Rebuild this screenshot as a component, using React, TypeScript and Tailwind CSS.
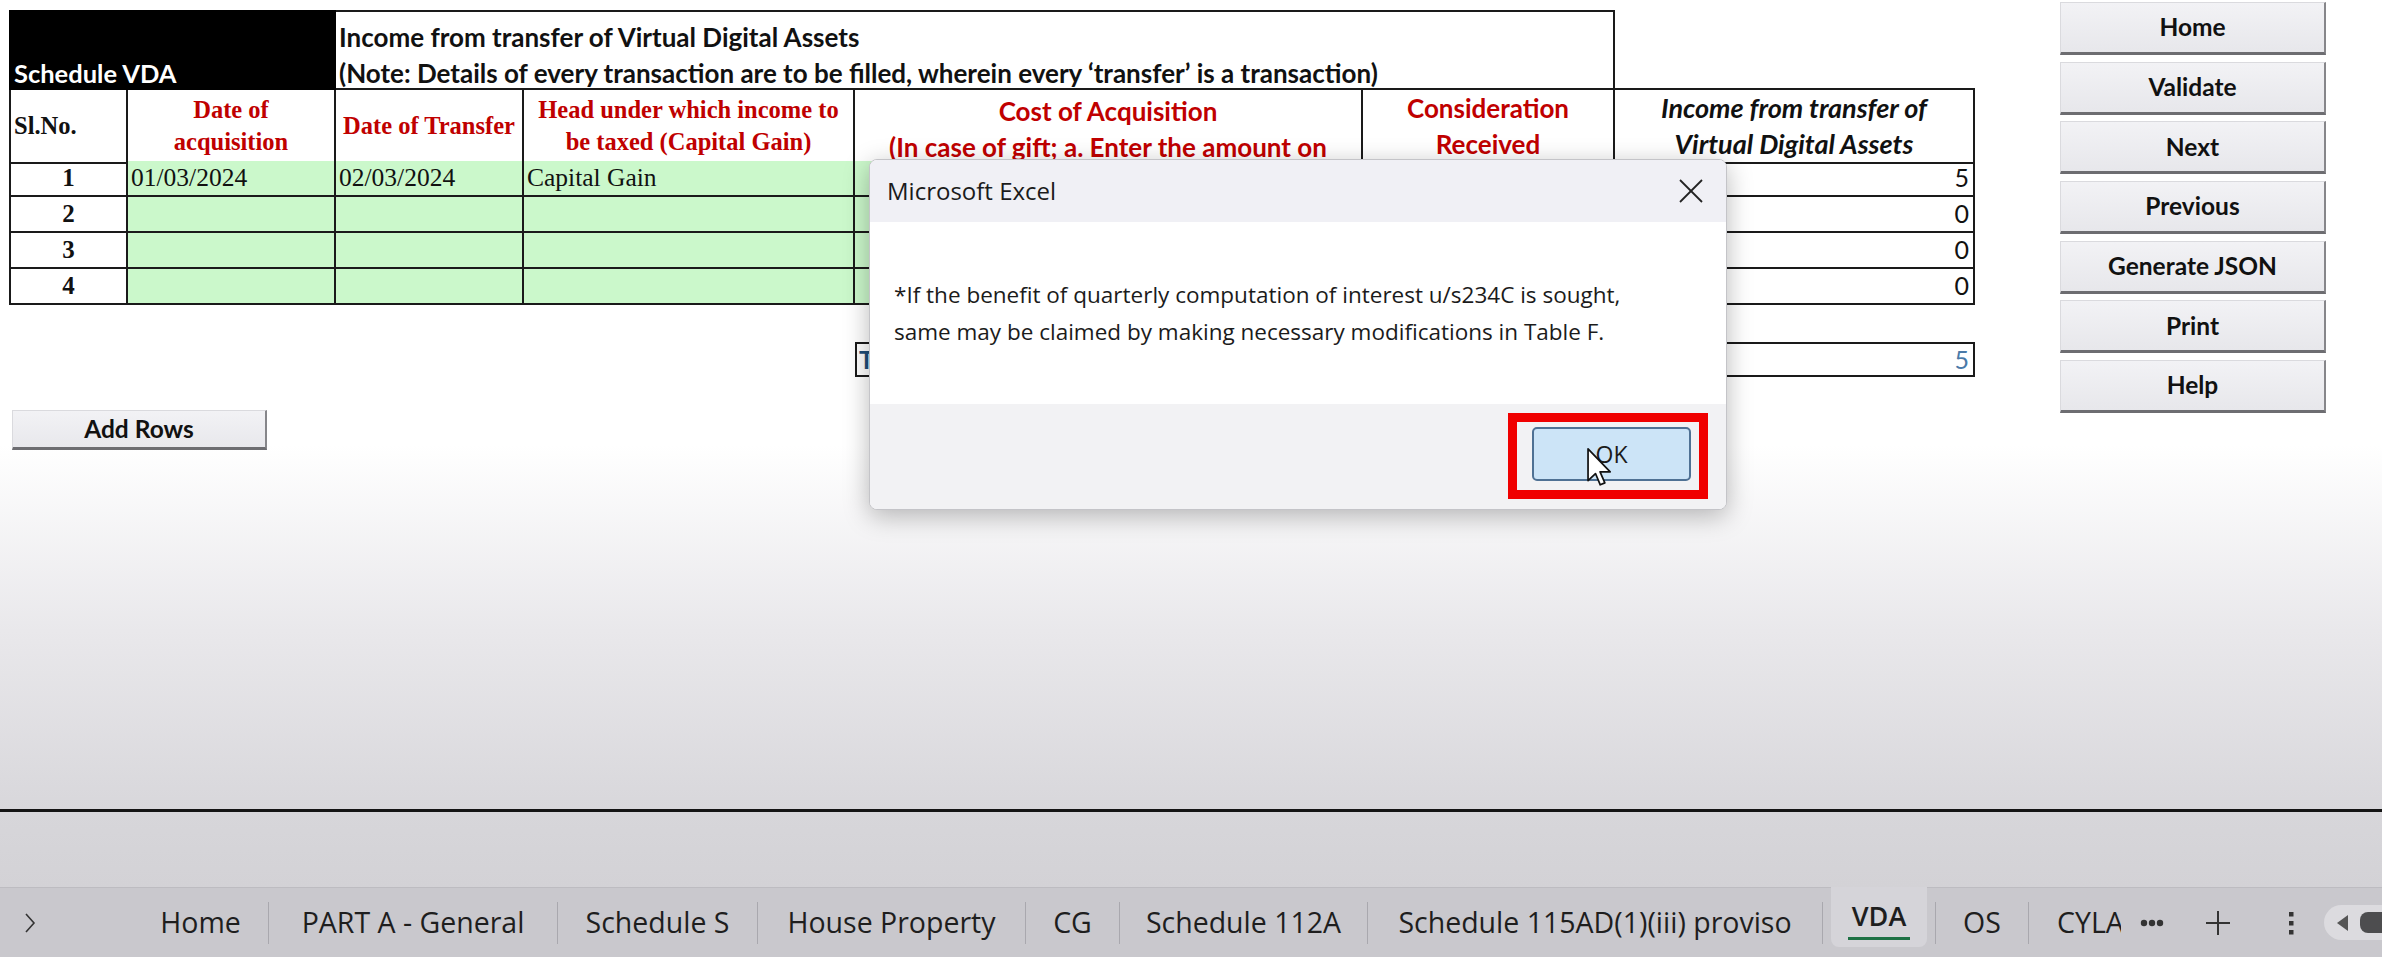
import React from "react";

const GRID = "grid grid-cols-[119px_208px_188px_331px_508px_252px_360px]";

function DataRow({ n, a, b, c, v }: { n: string; a?: string; b?: string; c?: string; v: string }) {
  const cell = "border-r-2 border-b-2 border-[#1a1a1a] h-[36px] flex items-center overflow-hidden whitespace-nowrap";
  const green = "bg-[#cbf8cb]";
  return (
    <div className={GRID}>
      <div className={`${cell} border-l-2 justify-center font-['Liberation_Serif',serif] font-bold text-[25px] text-[#111]`}>{n}</div>
      <div className={`${cell} ${green} pl-[3px] font-['Liberation_Serif',serif] text-[25.5px] text-[#111]`}>{a}</div>
      <div className={`${cell} ${green} pl-[3px] font-['Liberation_Serif',serif] text-[25.5px] text-[#111]`}>{b}</div>
      <div className={`${cell} ${green} pl-[3px] font-['Liberation_Serif',serif] text-[25.5px] text-[#111]`}>{c}</div>
      <div className={`${cell} ${green}`}></div>
      <div className={`${cell} ${green}`}></div>
      <div className={`${cell} justify-end pr-[4px] font-['Lato',sans-serif] text-[25px] text-[#111]`}>{v}</div>
    </div>
  );
}

function SideButton({ label }: { label: string }) {
  return (
    <div className="h-[53px] w-[266px] bg-[linear-gradient(to_bottom,#f2f2f5,#e7e7eb)] border-t border-l border-[#dadade] border-b-[3px] border-b-[#6d6d71] border-r-2 border-r-[#86868a] flex items-center justify-center font-['Lato',sans-serif] font-bold text-[24.5px] text-[#111]">
      {label}
    </div>
  );
}

function Sep() {
  return <div className="w-px h-[42px] bg-[#a9a8ae] self-center shrink-0" />;
}

function Tab({ w, label }: { w: string; label: string }) {
  return (
    <div className={`${w} shrink-0 flex items-center justify-center whitespace-nowrap`}>{label}</div>
  );
}

export default function App() {
  return (
    <div className="relative w-[2382px] h-[957px] overflow-hidden flex flex-col bg-white">
      {/* Sheet area */}
      <div className="h-[809px] flex bg-[linear-gradient(to_bottom,#ffffff_0%,#ffffff_55%,#e9e8eb_78%,#d8d7db_100%)]">
        {/* Left column: table */}
        <div className="w-[2060px] pl-[9px] pt-[10px] flex flex-col">
          {/* Title row */}
          <div className={`${GRID} h-[80px]`}>
            <div className="col-span-2 bg-black flex items-end pl-[5px] pb-[2px] text-white font-['Lato',sans-serif] font-bold text-[25.5px] leading-[30px]">
              Schedule VDA
            </div>
            <div className="col-span-4 border-t-2 border-r-2 border-b-2 border-[#1a1a1a] pl-[3px] pt-[7px] font-['Lato',sans-serif] font-bold text-[26px] leading-[36px] text-[#111] whitespace-nowrap overflow-hidden">
              <div>Income from transfer of Virtual Digital Assets</div>
              <div>(Note: Details of every transaction are to be filled, wherein every ‘transfer’ is a transaction)</div>
            </div>
            <div className="border-b-2 border-[#1a1a1a]"></div>
          </div>
          {/* Header row */}
          <div className={`${GRID} h-[71px]`}>
            <div className="border-l-2 border-r-2 border-b-2 border-[#1a1a1a] flex items-center pl-[3px] font-['Liberation_Serif',serif] font-bold text-[24.5px] text-[#111]">
              Sl.No.
            </div>
            <div className="border-r-2 border-b-2 border-[#1a1a1a] flex flex-col items-center justify-center font-['Liberation_Serif',serif] font-bold text-[24.5px] leading-[32px] text-[#c00000]">
              <div>Date of</div>
              <div>acquisition</div>
            </div>
            <div className="border-r-2 border-b-2 border-[#1a1a1a] flex items-center justify-center font-['Liberation_Serif',serif] font-bold text-[24.5px] text-[#c00000] whitespace-nowrap">
              Date of Transfer
            </div>
            <div className="border-r-2 border-b-2 border-[#1a1a1a] flex flex-col items-center justify-center font-['Liberation_Serif',serif] font-bold text-[24.5px] leading-[32px] text-[#c00000] whitespace-nowrap">
              <div>Head under which income to</div>
              <div>be taxed (Capital Gain)</div>
            </div>
            <div className="border-r-2 border-b-2 border-[#1a1a1a] overflow-hidden flex flex-col items-center pt-[3px] font-['Lato',sans-serif] font-bold text-[26px] leading-[36px] text-[#c00000] whitespace-nowrap">
              <div>Cost of Acquisition</div>
              <div>(In case of gift; a. Enter the amount on</div>
            </div>
            <div className="border-r-2 border-b-2 border-[#1a1a1a] flex flex-col items-center justify-center font-['Lato',sans-serif] font-bold text-[26px] leading-[36px] text-[#c00000]">
              <div>Consideration</div>
              <div>Received</div>
            </div>
            <div className="border-r-2 border-b-2 border-[#1a1a1a] flex flex-col items-center justify-center font-['Lato',sans-serif] font-bold italic text-[27px] leading-[36px] text-[#111] whitespace-nowrap">
              <div>Income from transfer of</div>
              <div>Virtual Digital Assets</div>
            </div>
          </div>
          <DataRow n="1" a="01/03/2024" b="02/03/2024" c="Capital Gain" v="5" />
          <DataRow n="2" v="0" />
          <DataRow n="3" v="0" />
          <DataRow n="4" v="0" />

          {/* Total row */}
          <div className="mt-[37px] ml-[846px] w-[1120px] h-[35px] border-2 border-[#1a1a1a] flex font-['Lato',sans-serif] text-[25px]">
            <div className="w-[758px] border-r-2 border-[#1a1a1a] flex items-center pl-[2px] font-bold text-[#1f4e79]">Total</div>
            <div className="flex-1 flex items-center justify-end pr-[4px] text-[#4a7aa8]">5</div>
          </div>

          {/* Add rows */}
          <div className="mt-[33px] ml-[3px] w-[255px] h-[40px] bg-[linear-gradient(to_bottom,#f2f2f5,#e8e8ec)] border-t border-l border-[#dadade] border-b-[3px] border-b-[#6d6d71] border-r-2 border-r-[#86868a] flex items-center justify-center font-['Lato',sans-serif] font-bold text-[24.5px] text-[#111]">
            Add Rows
          </div>
        </div>

        {/* Right buttons */}
        <div className="w-[266px] pt-[2px] flex flex-col gap-[6.7px]">
          <SideButton label="Home" />
          <SideButton label="Validate" />
          <SideButton label="Next" />
          <SideButton label="Previous" />
          <SideButton label="Generate JSON" />
          <SideButton label="Print" />
          <SideButton label="Help" />
        </div>
      </div>

      {/* Black line */}
      <div className="h-[3px] bg-[#141414]" />
      {/* Gray gap */}
      <div className="h-[75px] bg-[linear-gradient(to_bottom,#d7d6da,#d3d2d6)]" />

      {/* Sheet tabs */}
      <div className="h-[70px] bg-[#c9c8cd] border-t border-[#bdbcc1] flex items-stretch font-['Open_Sans',sans-serif] text-[28.5px] text-[#1e1e1e]">
        <div className="w-[133px] shrink-0 flex items-center pl-[24px]">
          <svg width="12" height="22" viewBox="0 0 12 22" fill="none">
            <polyline points="2,2 10,11 2,20" stroke="#333" strokeWidth="1.6" />
          </svg>
        </div>
        <Tab w="w-[135px]" label="Home" />
        <Sep />
        <Tab w="w-[288px]" label="PART A - General" />
        <Sep />
        <Tab w="w-[199px]" label="Schedule S" />
        <Sep />
        <Tab w="w-[267px]" label="House Property" />
        <Sep />
        <Tab w="w-[93px]" label="CG" />
        <Sep />
        <Tab w="w-[247px]" label="Schedule 112A" />
        <Sep />
        <Tab w="w-[454px]" label="Schedule 115AD(1)(iii) proviso" />
        <Sep />
        <div className="w-[112px] shrink-0 flex justify-center">
          <div className="w-[96px] h-[60px] -mt-px bg-[#d5d4d9] rounded-b-[8px] flex flex-col items-center pt-[11px]">
            <div className="leading-[36px] font-semibold text-[27px]">VDA</div>
            <div className="mt-[3px] w-[62px] h-[3px] bg-[#1e7145]" />
          </div>
        </div>
        <Sep />
        <Tab w="w-[92px]" label="OS" />
        <Sep />
        <div className="w-[92px] shrink-0 overflow-hidden pl-[28px] flex items-center whitespace-nowrap">CYLA</div>
        <div className="w-[43px] shrink-0 flex items-center pl-[19px]">
          <svg width="24" height="8" viewBox="0 0 24 8">
            <circle cx="4" cy="4" r="3.2" fill="#333" />
            <circle cx="12" cy="4" r="3.2" fill="#333" />
            <circle cx="20" cy="4" r="3.2" fill="#333" />
          </svg>
        </div>
        <div className="w-[69px] shrink-0 flex items-center justify-end pr-[2px]">
          <svg width="26" height="26" viewBox="0 0 26 26">
            <line x1="13" y1="1" x2="13" y2="25" stroke="#333" strokeWidth="2" />
            <line x1="1" y1="13" x2="25" y2="13" stroke="#333" strokeWidth="2" />
          </svg>
        </div>
        <div className="w-[85px] shrink-0 flex items-center pl-[54px]">
          <svg width="8" height="24" viewBox="0 0 8 24">
            <rect x="2" y="1" width="4.5" height="4.5" fill="#333" />
            <rect x="2" y="10" width="4.5" height="4.5" fill="#333" />
            <rect x="2" y="19" width="4.5" height="4.5" fill="#333" />
          </svg>
        </div>
        <div className="flex-1 flex items-center pl-[6px]">
          <div className="h-[35px] w-[80px] rounded-l-full bg-[#dcdbdf] flex items-center pl-[11px] gap-[11px]">
            <svg width="14" height="20" viewBox="0 0 14 20">
              <polygon points="13,2 13,18 2,10" fill="#555" />
            </svg>
            <div className="h-[21px] w-[40px] rounded-l-[8px] bg-[#4d4d4f]" />
          </div>
        </div>
      </div>

      {/* Dialog */}
      <div className="absolute left-[869px] top-[159px] w-[858px] h-[351px] rounded-[8px] border border-[#c4c4c8] shadow-[0_6px_26px_rgba(0,0,0,0.28)] overflow-hidden flex flex-col bg-white font-['Open_Sans',sans-serif] text-[#1b1b1b]">
        <div className="h-[62px] bg-[#f0f0f5] flex items-center justify-between pl-[17px] pr-[22px]">
          <div className="text-[24px]">Microsoft Excel</div>
          <svg width="26" height="26" viewBox="0 0 26 26">
            <line x1="2" y1="2" x2="24" y2="24" stroke="#222" strokeWidth="1.8" />
            <line x1="24" y1="2" x2="2" y2="24" stroke="#222" strokeWidth="1.8" />
          </svg>
        </div>
        <div className="h-[182px] bg-white flex flex-col justify-center pl-[24px] text-[22.5px] leading-[37px] whitespace-nowrap">
          <div>*If the benefit of quarterly computation of interest u/s234C is sought,</div>
          <div>same may be claimed by making necessary modifications in Table F.</div>
        </div>
        <div className="flex-1 bg-[#f2f2f4] flex justify-end items-start pt-[23px] pr-[35px]">
          <div className="w-[159px] h-[54px] rounded-[5px] bg-[#cce4f7] border-2 border-[#4f7194] flex items-center justify-center text-[23px] text-[#1b1b1b]">
            OK
          </div>
        </div>
      </div>

      {/* Red annotation box */}
      <div className="absolute left-[1508px] top-[413px] w-[200px] h-[86px] border-[9px] border-[#f00000]" />

      {/* Mouse cursor */}
      <div className="absolute left-[1586px] top-[447px]">
        <svg width="27" height="42" viewBox="0 0 14 22">
          <path d="M1 1 V17.6 L4.9 13.9 L7.4 19.8 L9.8 18.8 L7.3 13 H12.6 Z" fill="#ffffff" stroke="#111" strokeWidth="0.9" strokeLinejoin="round" />
        </svg>
      </div>
    </div>
  );
}
